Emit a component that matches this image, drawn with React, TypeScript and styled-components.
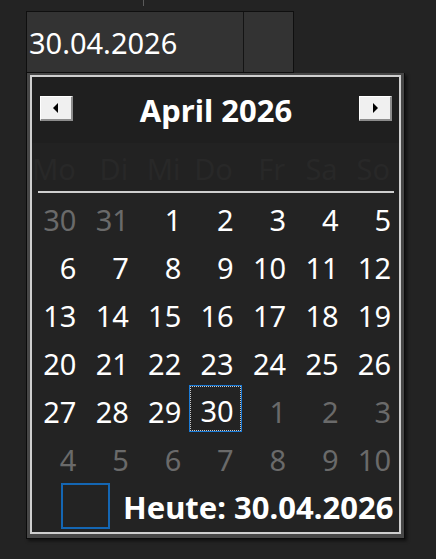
import React from "react";
import styled, { createGlobalStyle } from "styled-components";

const GlobalStyle = createGlobalStyle`
  html, body { margin: 0; padding: 0; background: #232323; }
  body { font-family: "Noto Sans", "Open Sans", sans-serif; }
  * { box-sizing: border-box; }
`;

const Page = styled.div`
  width: 436px;
  height: 559px;
  padding-left: 26px;
  background: #232323;
  overflow: hidden;
`;

const Tick = styled.div`
  width: 1px;
  height: 6px;
  margin-left: 117px;
  margin-bottom: 5px;
  background: #5a5a5a;
`;

const Field = styled.div`
  width: 268px;
  height: 62px;
  display: flex;
  border: 1px solid #0f0f0f;
  background: #333333;
`;

const FieldText = styled.div`
  width: 217px;
  display: flex;
  align-items: center;
  padding-left: 2px;
  padding-top: 1px;
  border-right: 1px solid #141414;
  color: #ffffff;
  font-size: 29px;
`;

const FieldButton = styled.div`
  flex: 1;
  background: #333333;
`;

const Popup = styled.div`
  width: 379px;
  height: 466px;
  border: 1px solid #0c0c0c;
  border-top: none;
  background: #474747;
  padding: 2px 3px 4px 3px;
  box-shadow: 2px 2px 3px rgba(0, 0, 0, 0.55);
`;

const Frame = styled.div`
  height: 100%;
  border: 2px solid #cfcfcf;
  background: #232323;
  display: flex;
  flex-direction: column;
`;

const Header = styled.div`
  height: 66px;
  flex-shrink: 0;
  background: #1f1f1f;
  display: flex;
  align-items: center;
  padding: 0 7px 0 8px;
`;

const NavButton = styled.div`
  width: 33px;
  height: 25px;
  margin-top: -3px;
  background: #f0f0f0;
  border-top: 1px solid #ffffff;
  border-left: 1px solid #ffffff;
  border-right: 2px solid #8c8c8c;
  border-bottom: 2px solid #8c8c8c;
  display: flex;
  align-items: center;
  justify-content: center;
`;

const Title = styled.div`
  flex: 1;
  text-align: center;
  color: #ffffff;
  font-weight: 700;
  font-size: 31px;
`;

const NamesRow = styled.div`
  height: 48px;
  flex-shrink: 0;
  display: grid;
  grid-template-columns: repeat(7, 1fr);
  align-items: center;
  padding-top: 2px;
  background: #222222;
`;

const DayName = styled.div`
  text-align: right;
  padding-right: 9px;
  color: #282828;
  font-size: 29px;
`;

const Separator = styled.div`
  height: 2px;
  flex-shrink: 0;
  margin: 0 5px 0 6px;
  background: #cfcfcf;
`;

const Grid = styled.div`
  display: grid;
  grid-template-columns: repeat(7, 1fr);
  grid-auto-rows: 48px;
`;

const Day = styled.div<{ $muted?: boolean; $today?: boolean }>`
  position: relative;
  display: flex;
  align-items: center;
  justify-content: flex-end;
  padding-right: 8px;
  padding-top: 4px;
  font-size: 29px;
  color: ${(p) => (p.$muted ? "#6a6a6a" : "#ffffff")};
  ${(p) =>
    p.$today
      ? `
    margin-bottom: 1px;
    border: 1px solid #1a7ad6;
    padding-right: 7px;
    padding-top: 3px;
    &::after {
      content: "";
      position: absolute;
      inset: 0;
      border: 1px dotted #c8c8c8;
    }
  `
      : ""}
`;

const Footer = styled.div`
  flex: 1;
  display: flex;
  align-items: center;
  padding-left: 29px;
  gap: 13px;
`;

const TodayBox = styled.div`
  width: 49px;
  height: 46px;
  margin-top: -1px;
  border: 2px solid #1466b3;
`;

const TodayText = styled.div`
  color: #ffffff;
  font-weight: 700;
  font-size: 31px;
  padding-top: 1px;
`;

const Arrow = ({ dir }: { dir: "left" | "right" }) => (
  <svg width="6" height="10" viewBox="0 0 6 10">
    {dir === "left" ? (
      <path d="M5 0 L0 5 L5 10 Z" fill="#000" />
    ) : (
      <path d="M1 0 L6 5 L1 10 Z" fill="#000" />
    )}
  </svg>
);

const names = ["Mo", "Di", "Mi", "Do", "Fr", "Sa", "So"];

type Cell = { n: number; muted?: boolean; today?: boolean };

const cells: Cell[] = [];
cells.push({ n: 30, muted: true }, { n: 31, muted: true });
for (let i = 1; i <= 30; i++) cells.push({ n: i, today: i === 30 });
for (let i = 1; i <= 10; i++) cells.push({ n: i, muted: true });

export default function App() {
  return (
    <>
      <GlobalStyle />
      <Page>
        <Tick />
        <Field>
          <FieldText>30.04.2026</FieldText>
          <FieldButton />
        </Field>
        <Popup>
          <Frame>
            <Header>
              <NavButton>
                <Arrow dir="left" />
              </NavButton>
              <Title>April 2026</Title>
              <NavButton>
                <Arrow dir="right" />
              </NavButton>
            </Header>
            <NamesRow>
              {names.map((n) => (
                <DayName key={n}>{n}</DayName>
              ))}
            </NamesRow>
            <Separator />
            <Grid>
              {cells.map((c, i) => (
                <Day key={i} $muted={c.muted} $today={c.today}>
                  {c.n}
                </Day>
              ))}
            </Grid>
            <Footer>
              <TodayBox />
              <TodayText>Heute: 30.04.2026</TodayText>
            </Footer>
          </Frame>
        </Popup>
      </Page>
    </>
  );
}
